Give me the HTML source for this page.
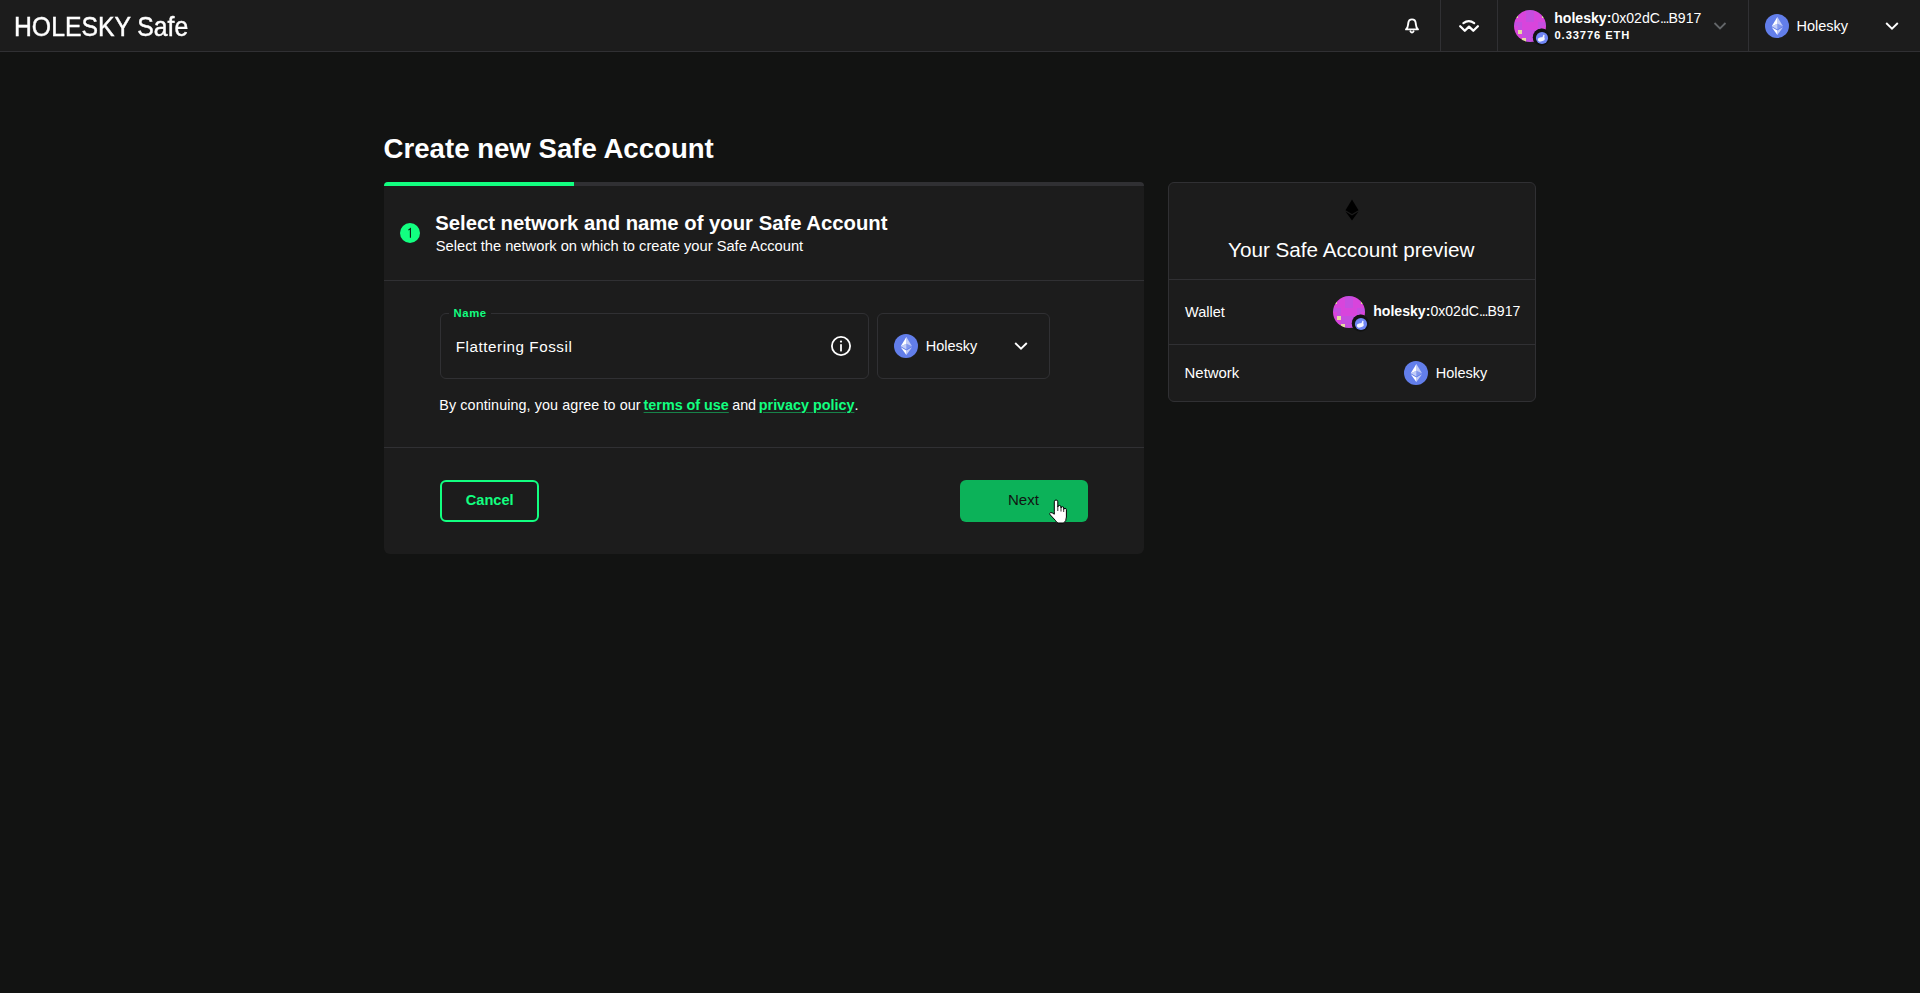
<!DOCTYPE html>
<html><head><meta charset="utf-8">
<style>
*{box-sizing:border-box;margin:0;padding:0}
html,body{width:1920px;height:993px;overflow:hidden;background:#121312;font-family:"Liberation Sans",sans-serif;color:#fff}
.t{position:absolute;line-height:1;white-space:nowrap}
.b{font-weight:700}
.hdr{position:absolute;left:0;top:0;width:1920px;height:52px;background:#1c1c1c;border-bottom:1px solid #303033}
.vd{position:absolute;top:0;width:1px;height:51px;background:#303033}
.card{position:absolute;background:#1c1c1c}
.hl{position:absolute;height:1px;background:#303033}
</style></head>
<body>
<!-- HEADER -->
<div class="hdr"></div>
<div class="t" style="left:13.8px;top:12.5px;font-size:27.5px;transform:scaleX(0.9);transform-origin:0 0;-webkit-text-stroke:.45px #fff">HOLESKY Safe</div>
<div class="vd" style="left:1440px"></div>
<div class="vd" style="left:1497px"></div>
<div class="vd" style="left:1748px"></div>
<!-- bell -->
<svg style="position:absolute;left:1400px;top:14px" width="24" height="24" viewBox="0 0 24 24">
 <path d="M6 15.4 Q7.9 13.6 8.1 10.5 L8.3 9 Q8.7 5.4 12 5.4 Q15.3 5.4 15.7 9 L15.9 10.5 Q16.1 13.6 18 15.4 Z" fill="none" stroke="#fff" stroke-width="1.9" stroke-linejoin="round"/>
 <path d="M10.4 17.3 Q12 19.8 13.6 17.3" fill="none" stroke="#fff" stroke-width="1.8" stroke-linecap="round"/>
</svg>
<!-- walletconnect -->
<svg style="position:absolute;left:1456px;top:14px" width="26" height="24" viewBox="0 0 26 24">
 <path d="M7.4 9.2 Q12.8 5.2 18.2 9.2" fill="none" stroke="#fff" stroke-width="2.2" stroke-linecap="round"/>
 <path d="M4.2 12.2 L8.8 16.7 L13 12.6 L17.3 16.7 L21.9 12.2" fill="none" stroke="#fff" stroke-width="2.3" stroke-linecap="round" stroke-linejoin="round"/>
</svg>
<!-- header avatar -->
<div id="av1" style="position:absolute;left:1514px;top:10px;width:32px;height:32px"><svg width="40" height="40" viewBox="0 0 40 40" style="position:absolute;left:0;top:0"><defs><clipPath id="cav1"><circle cx="16" cy="16" r="16"/></clipPath><mask id="mav1"><rect width="40" height="40" fill="#fff"/><circle cx="27.5" cy="27.3" r="8.7" fill="#000"/></mask></defs><g clip-path="url(#cav1)" mask="url(#mav1)"><rect width="32" height="32" fill="#d845dc"/><rect x="12" y="0" width="4" height="4" fill="#c54ee0"/><rect x="16" y="0" width="4" height="4" fill="#c54ee0"/><rect x="0" y="4" width="4" height="4" fill="#e4dca2"/><rect x="12" y="4" width="4" height="4" fill="#c54ee0"/><rect x="16" y="4" width="4" height="4" fill="#c54ee0"/><rect x="28" y="4" width="4" height="4" fill="#e4dca2"/><rect x="12" y="8" width="4" height="4" fill="#c54ee0"/><rect x="16" y="8" width="4" height="4" fill="#c54ee0"/><rect x="0" y="12" width="4" height="4" fill="#c54ee0"/><rect x="4" y="12" width="4" height="4" fill="#c54ee0"/><rect x="24" y="12" width="4" height="4" fill="#c54ee0"/><rect x="28" y="12" width="4" height="4" fill="#c54ee0"/><rect x="4" y="16" width="4" height="4" fill="#c54ee0"/><rect x="24" y="16" width="4" height="4" fill="#c54ee0"/><rect x="4" y="20" width="4" height="4" fill="#e4dca2"/><rect x="8" y="20" width="4" height="4" fill="#c54ee0"/><rect x="12" y="20" width="4" height="4" fill="#c54ee0"/><rect x="16" y="20" width="4" height="4" fill="#c54ee0"/><rect x="20" y="20" width="4" height="4" fill="#c54ee0"/><rect x="24" y="20" width="4" height="4" fill="#e4dca2"/><rect x="8" y="24" width="4" height="4" fill="#c54ee0"/><rect x="12" y="24" width="4" height="4" fill="#c54ee0"/><rect x="16" y="24" width="4" height="4" fill="#c54ee0"/><rect x="20" y="24" width="4" height="4" fill="#c54ee0"/><rect x="8" y="28" width="4" height="4" fill="#e4dca2"/><rect x="12" y="28" width="4" height="4" fill="#c54ee0"/><rect x="16" y="28" width="4" height="4" fill="#c54ee0"/><rect x="20" y="28" width="4" height="4" fill="#e4dca2"/></g><circle cx="27.5" cy="27.3" r="8.5" fill="#121312"/><circle cx="28" cy="28" r="6.1" fill="#7086f5"/><g fill="#fff" opacity=".93"><ellipse cx="27.3" cy="29.3" rx="3.5" ry="2" transform="rotate(-12 27.3 29.3)"/><path d="M28.2 28 L29.4 24.8 Q30.4 24.4 30.5 25.4 L30.3 28.4 Z"/><circle cx="25.6" cy="30.6" r="1"/></g></svg></div>
<div class="t b" style="left:1554.2px;top:10.7px;font-size:14.1px">holesky:<span style="font-weight:400">0x02dC<span style="letter-spacing:-1.1px">...</span>B917</span></div>
<div class="t b" style="left:1554.5px;top:29.6px;font-size:11.2px;letter-spacing:.9px">0.33776 ETH</div>
<svg style="position:absolute;left:1712px;top:20px" width="16" height="12" viewBox="0 0 16 12">
 <path d="M2.5 3 L8 8.5 L13.5 3" fill="none" stroke="#636669" stroke-width="1.8"/>
</svg>
<!-- header network -->
<div id="eth1" style="position:absolute;left:1765px;top:14px;width:24px;height:24px"><svg width="24" height="24" viewBox="0 0 32 32" style="position:absolute;left:0;top:0"><circle cx="16" cy="16" r="16" fill="#627eea"/><g fill="#fff"><path fill-opacity=".602" d="M16.498 4v8.87l7.497 3.35z"/><path d="M16.498 4L9 16.22l7.498-3.35z"/><path fill-opacity=".602" d="M16.498 21.968v6.027L24 17.616z"/><path d="M16.498 27.995v-6.028L9 17.616z"/><path fill-opacity=".2" d="M16.498 20.573l7.497-4.353-7.497-3.348z"/><path fill-opacity=".602" d="M9 16.22l7.498 4.353v-7.701z"/></g></svg></div>
<div class="t" style="left:1796.5px;top:18.5px;font-size:14.5px">Holesky</div>
<svg style="position:absolute;left:1884px;top:20px" width="16" height="12" viewBox="0 0 16 12">
 <path d="M2.2 3 L8 8.6 L13.8 3" fill="none" stroke="#fff" stroke-width="1.9"/>
</svg>

<!-- TITLE -->
<div class="t b" style="left:383.6px;top:134.7px;font-size:27.6px">Create new Safe Account</div>

<!-- MAIN CARD -->
<div class="card" style="left:384px;top:182px;width:760px;height:372px;border-radius:6px"></div>
<div style="position:absolute;left:384px;top:182px;width:760px;height:4px;background:#303033;border-radius:6px 6px 0 0;overflow:hidden">
  <div style="width:190px;height:4px;background:#12ff80"></div>
</div>
<div style="position:absolute;left:400px;top:223px;width:20px;height:20px;border-radius:50%;background:#12ff80"></div>
<svg style="position:absolute;left:400px;top:223px" width="20" height="20" viewBox="0 0 20 20"><path d="M8.4 7.1 L10.4 5.6 L10.4 14.8" fill="none" stroke="#121312" stroke-width="1.1"/></svg>
<div class="t b" style="left:435.2px;top:213px;font-size:20.3px">Select network and name of your Safe Account</div>
<div class="t" style="left:435.8px;top:239.3px;font-size:14.7px">Select the network on which to create your Safe Account</div>
<div class="hl" style="left:384px;top:280px;width:760px"></div>

<!-- name input -->
<div style="position:absolute;left:440px;top:313px;width:429px;height:66px;border:1px solid #303033;border-radius:6px"></div>
<div style="position:absolute;left:449px;top:311px;width:42px;height:4px;background:#1c1c1c"></div>
<div class="t b" style="left:453.6px;top:308.2px;font-size:11.3px;letter-spacing:.55px;color:#12ff80">Name</div>
<div class="t" style="left:455.8px;top:338.9px;font-size:15.2px;letter-spacing:.55px">Flattering Fossil</div>
<svg style="position:absolute;left:829px;top:334px" width="24" height="24" viewBox="0 0 24 24">
 <circle cx="12" cy="12" r="9.1" fill="none" stroke="#fff" stroke-width="1.8"/>
 <circle cx="12" cy="7.6" r="1.1" fill="#fff"/>
 <rect x="11.1" y="10.2" width="1.8" height="7.2" fill="#fff"/>
</svg>
<!-- network select -->
<div style="position:absolute;left:877px;top:313px;width:173px;height:66px;border:1px solid #303033;border-radius:6px"></div>
<div id="eth2" style="position:absolute;left:894px;top:334px;width:24px;height:24px"><svg width="24" height="24" viewBox="0 0 32 32" style="position:absolute;left:0;top:0"><circle cx="16" cy="16" r="16" fill="#627eea"/><g fill="#fff"><path fill-opacity=".602" d="M16.498 4v8.87l7.497 3.35z"/><path d="M16.498 4L9 16.22l7.498-3.35z"/><path fill-opacity=".602" d="M16.498 21.968v6.027L24 17.616z"/><path d="M16.498 27.995v-6.028L9 17.616z"/><path fill-opacity=".2" d="M16.498 20.573l7.497-4.353-7.497-3.348z"/><path fill-opacity=".602" d="M9 16.22l7.498 4.353v-7.701z"/></g></svg></div>
<div class="t" style="left:925.7px;top:338.9px;font-size:14.5px;color:#fff">Holesky</div>
<svg style="position:absolute;left:1013px;top:340px" width="16" height="12" viewBox="0 0 16 12">
 <path d="M2.2 3 L8 8.6 L13.8 3" fill="none" stroke="#fff" stroke-width="1.9"/>
</svg>

<div class="t" style="left:439.3px;top:397.9px;font-size:14.33px;letter-spacing:.1px">By continuing, you agree to our</div>
<div class="t b" style="left:643.6px;top:397.9px;font-size:14.33px;color:#12ff80;text-decoration:underline;text-decoration-color:rgba(18,255,128,.45);text-underline-offset:1.5px;text-decoration-thickness:1px">terms of use</div>
<div class="t" style="left:732.2px;top:397.9px;font-size:14.33px">and</div>
<div class="t" style="left:758.8px;top:397.9px;font-size:14.33px"><span class="b" style="color:#12ff80;text-decoration:underline;text-decoration-color:rgba(18,255,128,.45);text-underline-offset:1.5px;text-decoration-thickness:1px">privacy policy</span>.</div>
<div class="hl" style="left:384px;top:447px;width:760px"></div>

<!-- buttons -->
<div style="position:absolute;left:440px;top:480px;width:99px;height:42px;border:2px solid #12ff80;border-radius:6px"></div>
<div class="t b" style="left:465.8px;top:492.6px;font-size:14.6px;color:#12ff80">Cancel</div>
<div style="position:absolute;left:960px;top:480px;width:128px;height:42px;background:#0cb259;border-radius:6px"></div>
<div class="t" style="left:1008px;top:492px;font-size:15px;color:#121312">Next</div>
<!-- cursor -->
<svg style="position:absolute;left:1046px;top:496px" width="26" height="30" viewBox="0 0 26 30">
 <path d="M8.3 15.8 L8.3 5.8 Q8.3 4 10.05 4 Q11.8 4 11.8 5.8 L11.8 11 Q11.8 9.5 13.4 9.5 Q15 9.5 15 11 L15 12 Q15 10.7 16.35 10.7 Q17.7 10.7 17.7 12.2 L17.7 13.6 Q17.7 12.3 19.05 12.3 Q20.4 12.3 20.4 13.8 L20.4 21 Q20.4 25.5 17.5 27 L12 27 Q10.5 26.5 9.5 24.5 L4.2 18.8 Q3 17.2 4.6 16.6 Q6 16.3 8.3 18.2 Z" fill="#fff" stroke="#000" stroke-width="1" stroke-linejoin="round"/>
 <path d="M11.8 11 L11.8 15 M15 12 L15 15.5 M17.7 13.6 L17.7 16" stroke="#000" stroke-width=".8"/>
</svg>
<!-- PREVIEW CARD -->
<div class="card" style="left:1168px;top:182px;width:368px;height:220px;border:1px solid #303033;border-radius:6px"></div>
<svg style="position:absolute;left:1344px;top:198px" width="16" height="24" viewBox="0 0 16 24">
 <path d="M8 1.5 L14.5 12.2 L8 16 L1.5 12.2 Z" fill="#000"/>
 <path d="M8 17.4 L14.5 13.6 L8 22.5 L1.5 13.6 Z" fill="#000"/>
</svg>
<div class="t" style="left:1228px;top:240.2px;font-size:20.7px">Your Safe Account preview</div>
<div class="hl" style="left:1169px;top:279px;width:366px"></div>
<div class="t" style="left:1185px;top:304.8px;font-size:14.5px">Wallet</div>
<div id="av2" style="position:absolute;left:1333px;top:296px;width:32px;height:32px"><svg width="40" height="40" viewBox="0 0 40 40" style="position:absolute;left:0;top:0"><defs><clipPath id="cav2"><circle cx="16" cy="16" r="16"/></clipPath><mask id="mav2"><rect width="40" height="40" fill="#fff"/><circle cx="27.5" cy="27.3" r="8.7" fill="#000"/></mask></defs><g clip-path="url(#cav2)" mask="url(#mav2)"><rect width="32" height="32" fill="#d845dc"/><rect x="12" y="0" width="4" height="4" fill="#c54ee0"/><rect x="16" y="0" width="4" height="4" fill="#c54ee0"/><rect x="0" y="4" width="4" height="4" fill="#e4dca2"/><rect x="12" y="4" width="4" height="4" fill="#c54ee0"/><rect x="16" y="4" width="4" height="4" fill="#c54ee0"/><rect x="28" y="4" width="4" height="4" fill="#e4dca2"/><rect x="12" y="8" width="4" height="4" fill="#c54ee0"/><rect x="16" y="8" width="4" height="4" fill="#c54ee0"/><rect x="0" y="12" width="4" height="4" fill="#c54ee0"/><rect x="4" y="12" width="4" height="4" fill="#c54ee0"/><rect x="24" y="12" width="4" height="4" fill="#c54ee0"/><rect x="28" y="12" width="4" height="4" fill="#c54ee0"/><rect x="4" y="16" width="4" height="4" fill="#c54ee0"/><rect x="24" y="16" width="4" height="4" fill="#c54ee0"/><rect x="4" y="20" width="4" height="4" fill="#e4dca2"/><rect x="8" y="20" width="4" height="4" fill="#c54ee0"/><rect x="12" y="20" width="4" height="4" fill="#c54ee0"/><rect x="16" y="20" width="4" height="4" fill="#c54ee0"/><rect x="20" y="20" width="4" height="4" fill="#c54ee0"/><rect x="24" y="20" width="4" height="4" fill="#e4dca2"/><rect x="8" y="24" width="4" height="4" fill="#c54ee0"/><rect x="12" y="24" width="4" height="4" fill="#c54ee0"/><rect x="16" y="24" width="4" height="4" fill="#c54ee0"/><rect x="20" y="24" width="4" height="4" fill="#c54ee0"/><rect x="8" y="28" width="4" height="4" fill="#e4dca2"/><rect x="12" y="28" width="4" height="4" fill="#c54ee0"/><rect x="16" y="28" width="4" height="4" fill="#c54ee0"/><rect x="20" y="28" width="4" height="4" fill="#e4dca2"/></g><circle cx="27.5" cy="27.3" r="8.5" fill="#121312"/><circle cx="28" cy="28" r="6.1" fill="#7086f5"/><g fill="#fff" opacity=".93"><ellipse cx="27.3" cy="29.3" rx="3.5" ry="2" transform="rotate(-12 27.3 29.3)"/><path d="M28.2 28 L29.4 24.8 Q30.4 24.4 30.5 25.4 L30.3 28.4 Z"/><circle cx="25.6" cy="30.6" r="1"/></g></svg></div>
<div class="t b" style="left:1373.2px;top:303.6px;font-size:14.1px">holesky:<span style="font-weight:400">0x02dC<span style="letter-spacing:-1.1px">...</span>B917</span></div>
<div class="hl" style="left:1169px;top:344px;width:366px"></div>
<div class="t" style="left:1184.6px;top:366.2px;font-size:14.9px">Network</div>
<div id="eth3" style="position:absolute;left:1404px;top:361px;width:24px;height:24px"><svg width="24" height="24" viewBox="0 0 32 32" style="position:absolute;left:0;top:0"><circle cx="16" cy="16" r="16" fill="#627eea"/><g fill="#fff"><path fill-opacity=".602" d="M16.498 4v8.87l7.497 3.35z"/><path d="M16.498 4L9 16.22l7.498-3.35z"/><path fill-opacity=".602" d="M16.498 21.968v6.027L24 17.616z"/><path d="M16.498 27.995v-6.028L9 17.616z"/><path fill-opacity=".2" d="M16.498 20.573l7.497-4.353-7.497-3.348z"/><path fill-opacity=".602" d="M9 16.22l7.498 4.353v-7.701z"/></g></svg></div>
<div class="t" style="left:1435.7px;top:366px;font-size:14.5px">Holesky</div>
</body></html>
